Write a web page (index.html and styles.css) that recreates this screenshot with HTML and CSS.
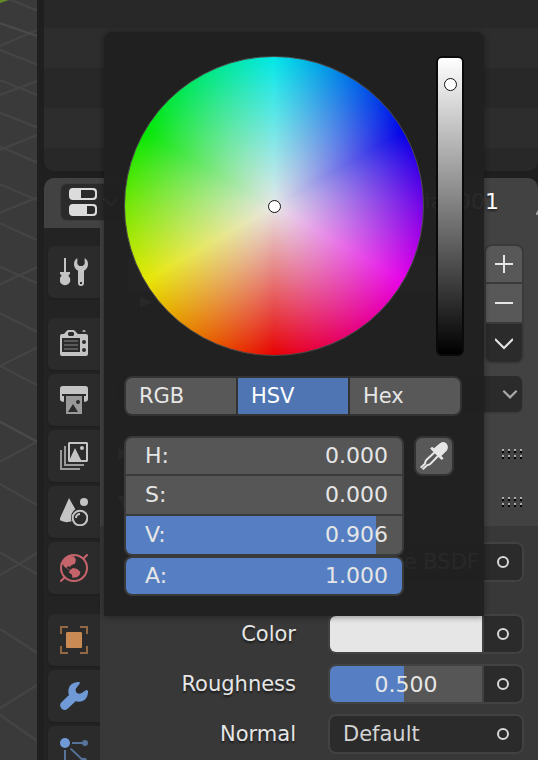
FILE: index.html
```
<!DOCTYPE html>
<html lang="en">
<head>
<meta charset="utf-8">
<title>Material properties</title>
<link rel="stylesheet" href="styles.css">
</head>
<body>
<div class="workspace">
  <aside class="viewport">
    <svg class="grid-lines" viewBox="0 0 111 2280" preserveAspectRatio="xMinYMin slice" aria-hidden="true">
      <path class="axis" d="M0 0H27L0 9Z"/>
      <path d="M20 -5L111 31M0 138L111 90M0 150L111 193M0 240L111 285M0 285L111 243M0 338L111 382M0 450L111 405M0 440L111 487M0 553L111 600M0 638L111 593M0 670L111 720M0 800L111 850M0 853L111 802M0 940L111 995M0 1098L111 1043M0 1098L111 1155M0 1385L111 1325M0 1452L111 1515M0 1657L111 1723M0 1725L111 1660M0 1887L111 1958M0 2125L111 2055M0 2145L111 2222"/>
      <path class="major" d="M0 70L111 108M0 1265L111 1325"/>
    </svg>
  </aside>
  <main class="editors">
    <section class="outliner" aria-label="Outliner"></section>
    <section class="properties">
      <header class="editor-header">
        <button class="editor-type" aria-label="Editor type">
          <svg class="icon" viewBox="0 0 84 84" aria-hidden="true">
            <path fill-rule="evenodd" d="M12 0H72a12 12 0 0 1 12 12V24a12 12 0 0 1-12 12H12A12 12 0 0 1 0 24V12A12 12 0 0 1 12 0ZM36 6V30H70a8 8 0 0 0 8-8V14a8 8 0 0 0-8-8Z"/>
            <path fill-rule="evenodd" d="M12 48H72a12 12 0 0 1 12 12V72a12 12 0 0 1-12 12H12A12 12 0 0 1 0 72V60A12 12 0 0 1 12 48ZM54 54V78H70a8 8 0 0 0 8-8V62a8 8 0 0 0-8-8Z"/>
          </svg>
          <svg class="chevron" viewBox="0 0 18 18" aria-hidden="true"><path d="M3 6L9 12L15 6"/></svg>
        </button>
        <span class="crumb">Material.001</span>
        <svg class="pin" viewBox="0 0 2 28" aria-hidden="true"><path d="M0 27V25L2 22V27Z"/></svg>
      </header>
      <div class="editor-body">
        <nav class="tabs" aria-label="Properties tabs">
          <button class="tab tab-last" aria-label="Tool">
            <svg class="icon" viewBox="0 0 84 84"><path d="M12 0H18V42H30V47L25 53A16 16 0 1 1 5 53L0 47V42H12Z"/><path fill-rule="evenodd" d="M52 0V18L58 24H68L74 18V0Q84 6 84 19Q84 32 72 38V75A9 9 0 0 1 54 75V38Q42 32 42 19Q42 6 52 0ZM60 72V78H66V72Z"/></svg>
          </button>
          <button class="tab" aria-label="Render">
            <svg class="icon" viewBox="0 0 84 84"><path fill-rule="evenodd" d="M6 12H12L22 1Q24 0 27 0H40Q43 0 45 3L54 12H78Q84 12 84 18V72Q84 78 78 78H6Q0 78 0 72V18Q0 12 6 12ZM24 9V15L27 18H39L42 15V9L39 6H27ZM6 24V66H60V24ZM72 30A6 6 0 1 0 72 42A6 6 0 1 0 72 30ZM72 54A6 6 0 1 0 72 66A6 6 0 1 0 72 54Z"/><path d="M67 5Q67 0 72 0Q77 0 77 5Z"/><path class="dim" d="M12 30H54V36H12ZM12 42H54V48H12ZM12 54H54V60H12Z"/></svg>
          </button>
          <button class="tab" aria-label="Output">
            <svg class="icon" viewBox="0 0 84 84"><path d="M8 0H76Q84 0 84 8V38Q84 47 75 47H72V30H78V24H6V30H12V47H9Q0 47 0 38V8Q0 0 8 0Z"/><path class="soft" fill-rule="evenodd" d="M18 30H66V84H18ZM24 78H54L39 54ZM54 42A6 6 0 1 0 54 54A6 6 0 1 0 54 42Z"/></svg>
          </button>
          <button class="tab" aria-label="View layer">
            <svg class="icon" viewBox="0 0 84 84"><path fill-rule="evenodd" d="M27 0H81L84 3V57L81 60H27L24 57V3ZM30 6V50L45 18L63 54H78V6ZM66 12A6 6 0 1 1 66 24A6 6 0 1 1 66 12Z"/><path class="soft" d="M12 12H18V66H72V72H12ZM0 24H6V78H60V84H0Z"/></svg>
          </button>
          <button class="tab" aria-label="Scene">
            <svg class="icon" viewBox="0 0 84 84"><path d="M27 0L46 34Q33 43 33 60Q33 68 35 70Q16 76 0 67V61Z"/><circle cx="72" cy="12" r="12"/><circle class="stroke" cx="60" cy="60" r="22"/><path class="stroke" d="M48 60A12 12 0 0 1 60 48"/></svg>
          </button>
          <button class="tab tab-last world" aria-label="World">
            <svg class="icon" viewBox="0 0 84 84"><circle class="stroke" cx="42" cy="42" r="39"/><path class="stroke" d="M69 15L83 1M15 69L1 83"/><path d="M10 20L26 6L42 7L48 17L45 29L35 33L30 39L24 36L20 42L31 48L26 47L13 38L7 29ZM31 47L39 42L52 45L61 54L59 63L51 70L37 71L36 62L26 55Z"/></svg>
          </button>
          <button class="tab object" aria-label="Object">
            <svg class="icon" viewBox="0 0 84 84"><path d="M20 18H64L66 20V64L64 66H20L18 64V20Z"/><path class="faded" d="M0 0H24V6H6V24H0ZM60 0H84V24H78V6H60ZM0 60H6V78H24V84H0ZM78 60H84V84H60V78H78Z"/></svg>
          </button>
          <button class="tab modifier" aria-label="Modifiers">
            <svg class="icon" viewBox="0 0 84 84"><path d="M54 0H59V5L49 18Q44 25 50 32Q57 38 65 33L79 24L84 26V32Q82 50 68 57Q58 61 47 58L22 81Q14 87 5 80Q-3 71 3 62L27 39Q22 26 29 13Q37 1 54 0Z"/></svg>
          </button>
          <button class="tab modifier" aria-label="Particles">
            <svg class="icon" viewBox="0 0 84 84"><circle cx="15" cy="15" r="15"/><g class="faded"><circle cx="75" cy="15" r="9"/><circle cx="72" cy="68" r="9"/><circle cx="15" cy="75" r="9"/><path d="M36 12H70V18H36ZM12 36H18V70H12ZM30 34L34 30L70 64L66 68Z"/></g></svg>
          </button>
        </nav>
        <div class="panels">
          <section class="material-panel">
            <div class="slots">
              <div class="slot-list">
                <div class="slot"></div>
                <svg class="triangle" viewBox="0 0 12 12"><path d="M0 0L12 6L0 12Z"/></svg>
              </div>
              <div class="slot-actions">
                <button class="slot-button" aria-label="Add slot"><svg viewBox="0 0 18 18"><path d="M9 0V18M0 9H18"/></svg></button>
                <button class="slot-button" aria-label="Remove slot"><svg viewBox="0 0 18 18"><path d="M0 9H18"/></svg></button>
                <button class="slot-button slot-menu" aria-label="Slot menu"><svg viewBox="0 0 18 18"><path d="M0 5L9 14L18 5"/></svg></button>
              </div>
            </div>
            <button class="datablock" aria-label="Link material"><svg class="chevron" viewBox="0 0 18 18"><path d="M3 6L9 12L15 6"/></svg></button>
            <div class="panel-heading"><svg class="triangle" viewBox="0 0 12 12"><path d="M0 0L12 6L0 12Z"/></svg><span class="grip"></span></div>
            <div class="panel-heading"><svg class="triangle" viewBox="0 0 12 12"><path d="M0 0H12L6 12Z"/></svg><span class="grip"></span></div>
          </section>
          <section class="surface-panel">
            <div class="property surface">
              <label for="surface">Surface</label>
              <div class="control"><input id="surface" class="value dark" type="text" value="Diffuse BSDF"><button class="socket" aria-label="Surface input"></button></div>
            </div>
            <div class="property">
              <label for="color">Color</label>
              <div class="control split"><input id="color" class="value swatch" type="color" value="#e6e6e6"><button class="socket" aria-label="Color input"></button></div>
            </div>
            <div class="property">
              <label for="roughness">Roughness</label>
              <div class="control split"><input id="roughness" class="value meter" type="text" value="0.500" style="--fill: 49%"><button class="socket" aria-label="Roughness input"></button></div>
            </div>
            <div class="property">
              <label for="normal">Normal</label>
              <div class="control"><input id="normal" class="value dark" type="text" value="Default"><button class="socket" aria-label="Normal input"></button></div>
            </div>
          </section>
        </div>
      </div>
    </section>
  </main>

  <section class="picker" aria-label="Color picker">
    <div class="picker-top">
      <div class="wheel"><span class="knob"></span></div>
      <div class="value-bar"><span class="knob"></span></div>
    </div>
    <div class="modes">
      <button class="mode">RGB</button>
      <button class="mode active">HSV</button>
      <button class="mode">Hex</button>
    </div>
    <div class="channels">
      <div class="channel-groups">
        <div class="channel-group">
          <div class="channel" style="--fill: 0%"><label for="h">H:</label><input id="h" type="text" value="0.000"></div>
          <div class="channel" style="--fill: 0%"><label for="s">S:</label><input id="s" type="text" value="0.000"></div>
          <div class="channel" style="--fill: 90.6%"><label for="v">V:</label><input id="v" type="text" value="0.906"></div>
        </div>
        <div class="channel-group">
          <div class="channel" style="--fill: 100%"><label for="a">A:</label><input id="a" type="text" value="1.000"></div>
        </div>
      </div>
      <button class="eyedropper" aria-label="Eyedropper">
        <svg class="icon" viewBox="0 0 84 84"><path d="M30 20L36 14L42 19L58 5Q68 -4 79 4Q88 15 80 26L64 42L71 49L65 54L56 46L31 20Z"/><path class="stroke" d="M44 31L19 54Q16 57 15 65L2 77M54 42L32 65Q29 69 21 70L8 82"/></svg>
      </button>
    </div>
  </section>
</div>
</body>
</html>
```
FILE: styles.css
```
*, *::before { box-sizing: border-box; }

body {
  margin: 0;
  background: #1f1f1f;
  color: #e6e6e6;
  font: 22px/26px "DejaVu Sans", sans-serif;
}

button, input {
  margin: 0;
  padding: 0;
  border: 0;
  background: none;
  color: inherit;
  font: inherit;
}

svg { display: block; }

.workspace {
  position: relative;
  display: flex;
  gap: 7px;
  height: 100vh;
  overflow: hidden;
}

.viewport {
  flex: none;
  width: 37px;
  background: #3a3a3a;
  overflow: hidden;
}

.grid-lines {
  width: 100%;
  fill: none;
  stroke: #444;
  stroke-width: 7;
}
.grid-lines .major { stroke: #4a4a4a; }
.grid-lines .axis { fill: #648a23; stroke: none; }

.editors {
  flex: 1;
  min-width: 0;
  display: flex;
  flex-direction: column;
  gap: 7px;
}

.outliner {
  flex: none;
  height: 171px;
  border-radius: 0 0 10px 10px;
  background: repeating-linear-gradient(#282828 0 28px, #2d2d2d 28px 68px, #282828 68px 80px);
}

.properties {
  flex: 1;
  display: flex;
  flex-direction: column;
  min-height: 0;
}

.editor-header {
  flex: none;
  display: flex;
  align-items: center;
  height: 50px;
  padding: 0 0 2px 17px;
  border-radius: 10px 10px 0 0;
  background: #424242;
  color: #fff;
  text-shadow: 0 2px 2px #222;
}
.crumb { margin: 0 37px 0 auto; }
.pin {
  width: 2px;
  height: 28px;
  fill: #999;
}

.editor-type {
  display: flex;
  align-items: center;
  gap: 4px;
  height: 36px;
  padding: 0 8px;
  border-radius: 6px;
  background: #2b2b2b;
  box-shadow: 0 0 0 1px #3c3c3c;
  color: #dcdcdc;
}

.icon {
  width: 28px;
  height: 28px;
  fill: currentColor;
}
.icon .stroke { fill: none; stroke: currentColor; stroke-width: 6; }
.icon .soft { opacity: .72; }
.icon .dim { opacity: .3; }
.icon .faded { opacity: .65; }

.chevron {
  width: 20px;
  height: 20px;
  fill: none;
  stroke: #a8a8a8;
  stroke-width: 2;
}

.editor-body {
  flex: 1;
  display: flex;
  min-height: 0;
}

.tabs {
  flex: none;
  display: flex;
  flex-direction: column;
  gap: 4px;
  width: 56px;
  padding: 18px 0 0 4px;
  background: #232323;
}

.tab {
  flex: none;
  height: 52px;
  padding-left: 12px;
  border-radius: 6px 0 0 6px;
  background: #2b2b2b;
  box-shadow: 0 1px 0 1px #202020;
  color: #c4c4c4;
}
.tab-last { margin-bottom: 16px; }
.world { color: #c6646c; }
.object { color: #c98a53; }
.modifier { color: #6f9ad6; }

.panels {
  flex: 1;
  min-width: 0;
  display: flex;
  flex-direction: column;
  background: #383838;
}

.material-panel {
  padding: 18px 16px 0 18px;
  background: #424242;
}

.slots {
  display: flex;
  gap: 14px;
  align-items: flex-start;
  margin-bottom: 14px;
}

.slot-list {
  flex: 1;
  padding: 10px;
  border-radius: 6px;
  background: #333;
}
.slot {
  height: 36px;
  margin-bottom: 4px;
  border-radius: 6px;
  background: #6a6a6a;
}

.triangle {
  width: 12px;
  height: 12px;
  fill: #bbb;
}
.slot-list .triangle { margin-left: 12px; }

.slot-actions {
  display: grid;
  grid-template-rows: 36px 38px 38px;
  gap: 2px;
  width: 36px;
  border-radius: 6px;
  background: #3a3a3a;
  box-shadow: 0 0 0 2px #3a3a3a;
  overflow: hidden;
}

.slot-button {
  display: grid;
  place-items: center;
  background: #585858;
}
.slot-button svg {
  width: 18px;
  height: 18px;
  fill: none;
  stroke: #e6e6e6;
  stroke-width: 2;
}
.slot-menu { background: #2b2b2b; }

.datablock {
  display: flex;
  align-items: center;
  justify-content: flex-end;
  width: 100%;
  height: 36px;
  margin-bottom: 18px;
  padding-right: 2px;
  border-radius: 6px;
  background: #2b2b2b;
  box-shadow: 0 1px 0 1px #3c3c3c;
}

.panel-heading {
  display: flex;
  align-items: center;
  justify-content: space-between;
  height: 48px;
}

.grip {
  width: 20px;
  height: 10px;
  background:
    repeating-linear-gradient(90deg, transparent 0 2px, #424242 2px 6px),
    linear-gradient(#aaa 2px, #000 2px 4px, #424242 4px 6px, #aaa 6px 8px, #000 8px);
}

.surface-panel {
  flex: 1;
  display: flex;
  flex-direction: column;
  gap: 14px;
  padding: 18px 16px 0 0;
}

.property {
  display: grid;
  grid-template-columns: 196px 1fr;
  column-gap: 34px;
  align-items: center;
}
.property label {
  font-size: 21px;
  text-align: right;
  text-shadow: 0 2px 2px #1c1c1c;
}
.surface { margin-bottom: 22px; }

.control {
  display: flex;
  height: 36px;
  border-radius: 6px;
  background: #2b2b2b;
  box-shadow: 0 0 0 2px #424242;
}
.split { gap: 2px; background: #424242; }

.value {
  flex: 1;
  width: 0;
  min-width: 0;
  height: 36px;
  border-radius: 6px 0 0 6px;
}
.dark {
  padding-left: 13px;
  color: #d4d4d4;
  font-size: 21px;
}
.meter {
  text-align: center;
  background: linear-gradient(90deg, #557fc2 var(--fill), #565656 var(--fill));
}
.swatch { appearance: none; overflow: hidden; }
.swatch::-webkit-color-swatch-wrapper { padding: 0; }
.swatch::-webkit-color-swatch { border: 0; border-radius: 0; }

.socket {
  display: grid;
  place-items: center;
  width: 38px;
  border-radius: 0 6px 6px 0;
  background: #2b2b2b;
}
.socket::before {
  content: "";
  width: 12px;
  height: 12px;
  border: 2px solid #d8d8d8;
  border-radius: 50%;
}

/* Color picker popup */
.picker {
  position: absolute;
  top: 32px;
  left: 104px;
  right: 54px;
  padding: 24px 20px 20px;
  border-radius: 8px 8px 0 0;
  background: rgba(32, 32, 32, .96);
  box-shadow: 0 1px 6px rgba(0, 0, 0, .4);
}

.picker-top {
  display: flex;
  gap: 12px;
  margin-bottom: 20px;
}

.wheel {
  flex: 1;
  display: grid;
  place-items: center;
  aspect-ratio: 1;
  border: 1px solid #4a4a4a;
  border-radius: 50%;
  background:
    radial-gradient(closest-side, #e7e7e7, rgba(231, 231, 231, 0)) border-box,
    conic-gradient(#00e7e7, #0000e7, #e700e7, #e70000, #e7e700, #00e700, #00e7e7) border-box;
}

.knob {
  width: 13px;
  height: 13px;
  border: 1px solid #111;
  border-radius: 50%;
  background: #fff;
}

.value-bar {
  display: flex;
  justify-content: center;
  width: 28px;
  padding-top: 20px;
  border: 2px solid #0a0a0a;
  border-radius: 6px;
  background: linear-gradient(#fff, #000);
}

.modes {
  display: grid;
  grid-template-columns: repeat(3, 1fr);
  gap: 2px;
  height: 40px;
  margin: 0 2px 20px 0;
  border: 2px solid #333;
  border-radius: 8px;
  background: #333;
  font-size: 21px;
  overflow: hidden;
}
.mode {
  padding-left: 13px;
  background: #585858;
  text-align: left;
}
.active { background: #4f76b3; color: #fff; }

.channels {
  display: flex;
  align-items: flex-start;
  gap: 10px;
  padding-right: 10px;
}
.channel-groups { flex: 1; }

.channel-group {
  display: grid;
  gap: 2px;
  border: 2px solid #3a3a3a;
  border-radius: 8px;
  background: #3a3a3a;
  overflow: hidden;
}

.channel {
  display: flex;
  align-items: center;
  height: 38px;
  padding: 0 14px 0 19px;
  background: linear-gradient(90deg, #557fc2 var(--fill), #565656 var(--fill));
}
.channel:first-child { height: 36px; }
.channel input {
  flex: 1;
  width: 0;
  min-width: 0;
  text-align: right;
}

.eyedropper {
  display: grid;
  place-items: center;
  width: 40px;
  height: 40px;
  border: 2px solid #333;
  border-radius: 8px;
  background: #585858;
}
```
